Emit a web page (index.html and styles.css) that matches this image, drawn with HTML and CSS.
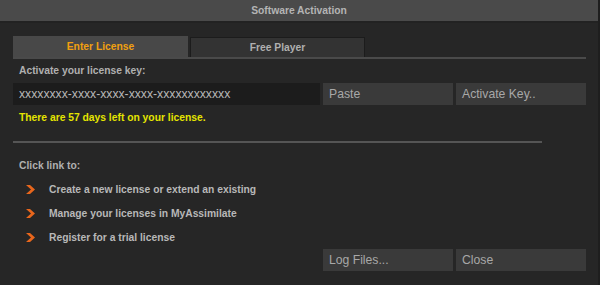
FILE: index.html
```html
<!DOCTYPE html>
<html>
<head>
<meta charset="utf-8">
<link rel="stylesheet" href="styles.css">
</head>
<body>
<div class="window">
  <div class="titlebar">Software Activation</div>
  <div class="content">
    <div class="tabs">
      <div class="tab active">Enter License</div>
      <div class="tab">Free Player</div>
    </div>
    <div class="label">Activate your license key:</div>
    <div class="keyrow">
      <div class="keyinput">xxxxxxxx-xxxx-xxxx-xxxx-xxxxxxxxxxxx</div>
      <div class="btn">Paste</div>
      <div class="btn">Activate Key..</div>
    </div>
    <div class="notice">There are 57 days left on your license.</div>
    <div class="separator"></div>
    <div class="label label-links">Click link to:</div>
    <ul class="links">
      <li class="link"><svg class="chev" width="9" height="9" viewBox="0 0 9 9"><polygon points="0,0 4,0 9,4.5 4,9 0,9 5,4.5" fill="#e8661c"/></svg><span>Create a new license or extend an existing</span></li>
      <li class="link"><svg class="chev" width="9" height="9" viewBox="0 0 9 9"><polygon points="0,0 4,0 9,4.5 4,9 0,9 5,4.5" fill="#e8661c"/></svg><span>Manage your licenses in MyAssimilate</span></li>
      <li class="link"><svg class="chev" width="9" height="9" viewBox="0 0 9 9"><polygon points="0,0 4,0 9,4.5 4,9 0,9 5,4.5" fill="#e8661c"/></svg><span>Register for a trial license</span></li>
    </ul>
    <div class="footer">
      <div class="btn">Log Files...</div>
      <div class="btn">Close</div>
    </div>
  </div>
</div>
</body>
</html>
```

FILE: styles.css
```css
html, body {
  margin: 0;
  padding: 0;
  background: #262626;
}
body {
  width: 600px;
  height: 285px;
  overflow: hidden;
  font-family: "Liberation Sans", Arial, sans-serif;
}
.window {
  width: 600px;
  height: 285px;
  box-sizing: border-box;
  border-right: 2px solid #1e1e1e;
  display: flex;
  flex-direction: column;
}
.titlebar {
  height: 21px;
  background: #4a4a4a;
  border-bottom: 2px solid #222;
  color: #b4b4b4;
  font-weight: bold;
  font-size: 10.3px;
  line-height: 22px;
  text-align: center;
}
.content {
  padding: 0 12px 0 13px;
  display: flex;
  flex-direction: column;
}
.tabs {
  margin-top: 13px;
  display: flex;
  gap: 2px;
  border-bottom: 2px solid #4a4a4a;
  height: 21px;
}
.tab {
  width: 175px;
  box-sizing: border-box;
  background: #333;
  border: 1px solid #1c1c1c;
  border-bottom: none;
  margin-top: 1px;
  color: #b0b0b0;
  font-weight: bold;
  font-size: 10.3px;
  line-height: 19px;
  text-align: center;
}
.tab.active {
  background: #484848;
  border: none;
  margin-top: 0;
  line-height: 21px;
  color: #f0a010;
}
.label {
  margin-top: 5px;
  padding-left: 6px;
  color: #b0b0b0;
  font-weight: bold;
  font-size: 10.3px;
  line-height: 14px;
}
.keyrow {
  margin-top: 5px;
  display: flex;
  gap: 3px;
  height: 22px;
}
.keyinput {
  width: 307px;
  box-sizing: border-box;
  background: #1c1c1c;
  color: #b8b8b8;
  font-size: 12.2px;
  line-height: 22px;
  padding-left: 6px;
}
.btn {
  width: 130px;
  height: 22px;
  box-sizing: border-box;
  background: #3a3a3a;
  color: #a8a8a8;
  font-size: 12.2px;
  line-height: 22px;
  padding-left: 6px;
}
.notice {
  margin-top: 6px;
  padding-left: 6px;
  color: #e4e400;
  font-weight: bold;
  font-size: 10.3px;
  line-height: 14px;
}
.separator {
  margin-top: 16px;
  width: 529px;
  height: 2px;
  background: #555;
}
.label-links {
  margin-top: 16px;
}
.links {
  list-style: none;
  margin: 4px 0 0 0;
  padding: 0;
}
.link {
  height: 24px;
  display: flex;
  align-items: center;
  padding-left: 13px;
  gap: 14px;
  color: #b8b8b8;
  font-weight: bold;
  font-size: 10.3px;
}
.chev {
  display: block;
  flex: none;
}
.footer {
  display: flex;
  justify-content: flex-end;
  gap: 3px;
}
```
